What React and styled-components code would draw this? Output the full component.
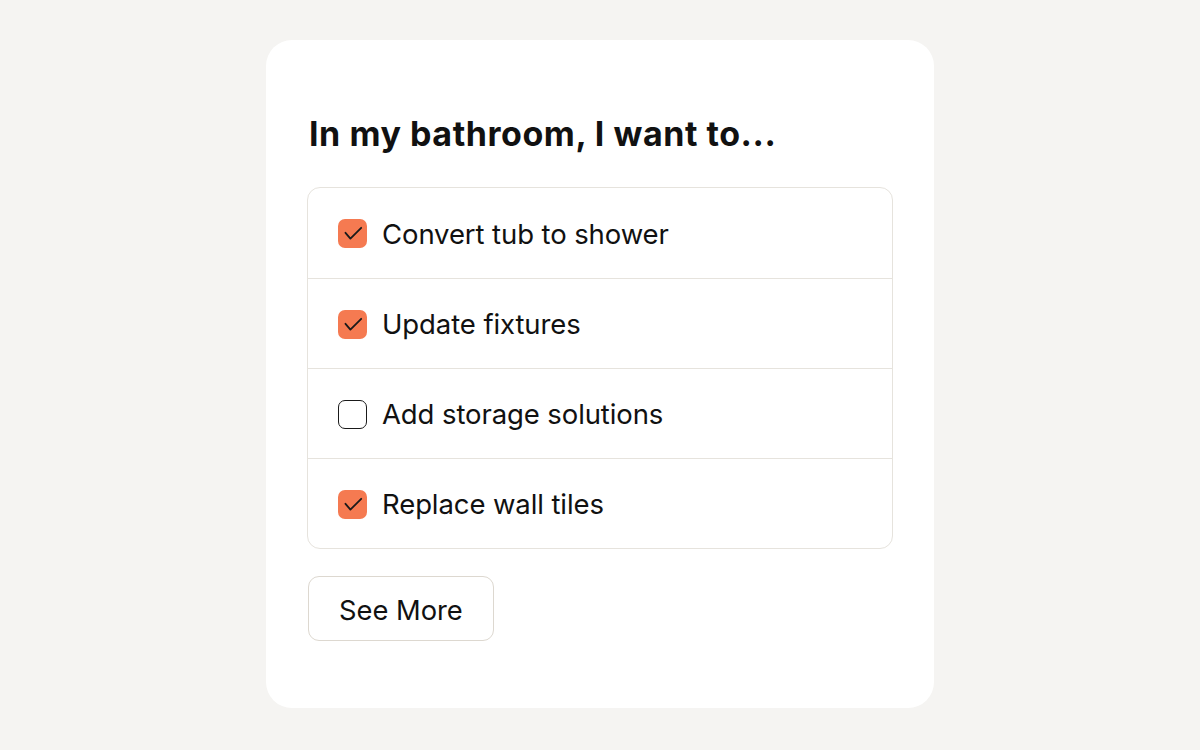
import styled, { createGlobalStyle } from "styled-components";

const GlobalStyle = createGlobalStyle`
  html, body {
    margin: 0;
    padding: 0;
    background: #f5f4f2;
    font-family: Inter, "Noto Sans", sans-serif;
    color: #111;
  }
`;

const items = [
  { label: "Convert tub to shower", checked: true },
  { label: "Update fixtures", checked: true },
  { label: "Add storage solutions", checked: false },
  { label: "Replace wall tiles", checked: true },
];

export default function App() {
  return (
    <>
      <GlobalStyle />
      <Page>
        <Card>
          <Heading>In my bathroom, I want to...</Heading>
          <List>
            {items.map((item) => (
              <Row key={item.label}>
                <Box checked={item.checked}>
                  {item.checked && (
                    <svg width="29" height="29" viewBox="0 0 29 29" fill="none">
                      <path
                        d="M7.5 13.8 L12.4 19.6 L23.2 8.8"
                        stroke="#1a1a1a"
                        strokeWidth="1.8"
                        strokeLinecap="round"
                        strokeLinejoin="round"
                      />
                    </svg>
                  )}
                </Box>
                <Label>{item.label}</Label>
              </Row>
            ))}
          </List>
          <MoreButton>See More</MoreButton>
        </Card>
      </Page>
    </>
  );
}

const Page = styled.div`
  width: 1200px;
  height: 750px;
  display: flex;
  justify-content: center;
  padding-top: 40px;
  box-sizing: border-box;
`;

const Card = styled.div`
  width: 668px;
  height: 668px;
  box-sizing: border-box;
  background: #ffffff;
  border-radius: 26px;
  padding: 74px 41px 0 41px;
  display: flex;
  flex-direction: column;
  align-items: flex-start;
`;

const Heading = styled.h1`
  margin: 0 0 33px 2px;
  font-size: 34px;
  line-height: 40px;
  font-weight: 650;
  letter-spacing: 0.55px;
`;

const List = styled.div`
  width: 586px;
  border: 1.5px solid #e6e3dd;
  border-radius: 13px;
  box-sizing: border-box;
  display: flex;
  flex-direction: column;
`;

const Row = styled.div`
  height: 90px;
  display: flex;
  align-items: center;
  gap: 15px;
  padding-left: 30px;
  padding-top: 1px;
  box-sizing: border-box;
  & + & {
    border-top: 1.5px solid #e6e3dd;
  }
`;

const Box = styled.div`
  width: 29px;
  height: 29px;
  flex-shrink: 0;
  box-sizing: border-box;
  border-radius: 7px;
  background: ${(p) => (p.checked ? "#f57a51" : "#fff")};
  border: ${(p) => (p.checked ? "none" : "1.5px solid #1a1a1a")};
  display: flex;
  align-items: center;
  justify-content: center;
`;

const Label = styled.span`
  font-size: 27.5px;
  font-weight: 400;
  letter-spacing: -0.1px;
`;

const MoreButton = styled.button`
  margin-top: 27px;
  margin-left: 1px;
  height: 65px;
  padding: 3px 30px 0;
  background: #fff;
  border: 1.5px solid #ddd8d0;
  border-radius: 11px;
  font-family: Inter, "Noto Sans", sans-serif;
  font-size: 27.3px;
  color: #111;
`;
